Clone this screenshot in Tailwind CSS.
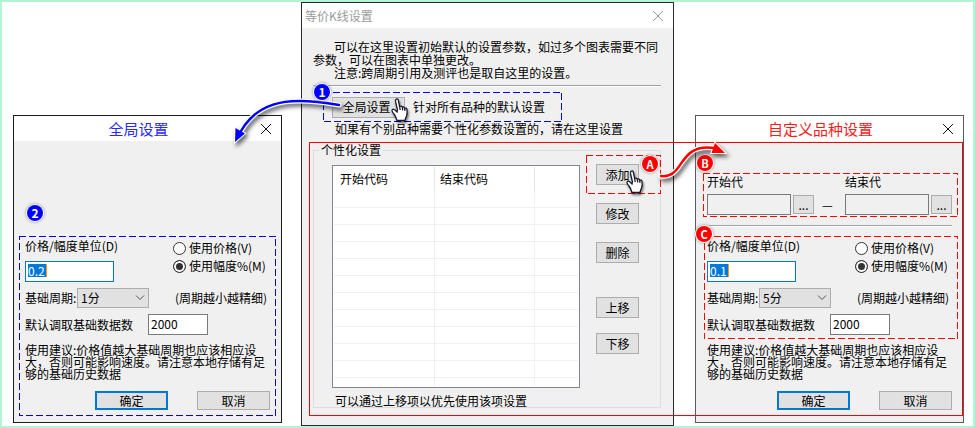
<!DOCTYPE html>
<html lang="zh-CN">
  <head>
    <meta charset="utf-8" />
    <meta name="viewport" content="width=device-width, initial-scale=1" />
    <title>等价K线设置</title>
    <script src="https://cdn.jsdelivr.net/npm/@tailwindcss/browser@4"></script>
  </head>

  <body class="bg-white">
    <main
      class="relative grid min-h-screen grid-cols-[269fr_373fr_269fr] items-end gap-5 border-2 border-[#b0f5d4] pl-[11px] pr-[9px] text-[12px] leading-[12px] text-black"
      style='font-family: "Noto Sans CJK SC", sans-serif;'
    >
      <!-- Global settings dialog -->
      <section class="mb-[3px] border border-[#1c1c1c] bg-[#f0f0f0]">
        <header class="flex h-[25px] items-center bg-white pr-[10px]">
          <h2 class="flex-1 pl-[2px] text-center text-[15px] text-[#2a2aff]">全局设置</h2>
          <button type="button" aria-label="关闭">
            <svg class="size-[10px]" viewBox="0 0 10 10" fill="none" stroke="#111"><path d="M0 0L10 10M10 0L0 10" /></svg>
          </button>
        </header>

        <form class="relative mx-[5px] mb-[6px] mt-[95px] px-[6px] pb-[6px] pt-px">
          <svg class="pointer-events-none absolute inset-0 h-full w-full" fill="none" stroke="#0000e6" stroke-width="2" stroke-dasharray="7 3">
            <rect width="100%" height="100%" />
          </svg>
          <span class="absolute -top-[31px] left-2 flex size-4 items-center justify-center rounded-full bg-[#0000ff] text-[12px] font-bold text-white shadow-[0_0_0_1px_#fff,0_0_3px_1px_#888]">2</span>

          <div class="flex justify-between">
            <div>
              <label class="block leading-[18px]" for="unit1">价格/幅度单位(D)</label>
              <input type="text" id="unit1" value="0.2" class="mt-[6px] block h-[21px] w-[89px] border border-solid border-[#0078d7] bg-white bg-[linear-gradient(to_right,#0078d7_18px,#ff9900_18px)] bg-[length:19px_13px] bg-[position:2px_2px] bg-no-repeat pb-[3px] pl-[2px] text-white outline-none" />
            </div>
            <div class="w-[97px] pt-[2px]">
              <label class="flex h-[18px] items-center gap-[3px] whitespace-nowrap">
                <input type="radio" name="mode1" class="size-[13px] appearance-none rounded-full border border-[#333] bg-white" />使用价格(V)
              </label>
              <label class="flex h-[18px] items-center gap-[3px] whitespace-nowrap">
                <input type="radio" name="mode1" checked class="size-[13px] appearance-none rounded-full border border-[#333] bg-[#333] shadow-[inset_0_0_0_2px_#fff]" />使用幅度%(M)
              </label>
            </div>
          </div>

          <div class="mt-[6px] flex items-center">
            <label class="w-[52px]" for="period1">基础周期:</label>
            <div class="relative">
              <select id="period1" class="block h-5 w-[72px] appearance-none border border-solid border-[#adadad] bg-[#e1e1e1] pl-[3px]">
                <option>1分</option>
              </select>
              <svg class="pointer-events-none absolute right-1 top-[7px] h-[6px] w-[10px]" viewBox="0 0 10 6" fill="none" stroke="#555"><path d="M1 0.5L5 4.5L9 0.5" /></svg>
            </div>
            <span class="ml-auto mr-[3px] whitespace-nowrap">(周期越小越精细)</span>
          </div>

          <div class="mt-[6px] flex items-center">
            <label class="w-[123px]" for="count1">默认调取基础数据数</label>
            <input type="text" id="count1" value="2000" class="h-[21px] w-[60px] border border-solid border-[#7a7a7a] bg-white pb-[3px] pl-[2px] outline-none" />
          </div>

          <p class="mt-[9px] whitespace-nowrap">
            使用建议:价格值越大基础周期也应该相应设<br />大，否则可能影响速度。请注意本地存储有足<br />够的基础历史数据
          </p>
          <div class="mt-[11px] flex justify-end gap-[29px]">
            <button type="button" class="h-[19px] w-[73px] border-2 border-[#0078d7] bg-[#e1e1e1]">确定</button>
            <button type="button" class="h-[19px] w-[73px] border border-[#adadad] bg-[#e1e1e1]">取消</button>
          </div>
        </form>
      </section>

      <!-- Main settings dialog -->
      <section class="-ml-px mr-px self-stretch border border-[#2a2a30] bg-[#f0f0f0]">
        <header class="flex h-[25px] items-center justify-between bg-white pl-[3px] pr-[10px] text-[#999]">
          <h1>等价K线设置</h1>
          <button type="button" aria-label="关闭">
            <svg class="size-[10px]" viewBox="0 0 10 10" fill="none" stroke="#999"><path d="M0 0L10 10M10 0L0 10" /></svg>
          </button>
        </header>

        <div class="pl-[11px] pr-3 pt-3">
          <div class="whitespace-nowrap leading-[13px]">
            <p class="indent-[21px]">可以在这里设置初始默认的设置参数，如过多个图表需要不同<br />参数，可以在图表中单独更改。</p>
            <p class="indent-[21px]">注意:跨周期引用及测评也是取自这里的设置。</p>
          </div>
          <hr class="mt-[6px] h-[2px] border-b border-t border-b-white border-t-[#a0a0a0]" />

          <div class="relative ml-[10px] mt-[5px] flex h-[30px] w-[239px] items-center gap-2 pl-[9px]">
            <svg class="pointer-events-none absolute inset-0 h-full w-full" fill="none" stroke="#0000e6" stroke-width="2" stroke-dasharray="7 3">
              <rect width="100%" height="100%" />
            </svg>
            <span class="absolute -left-[9px] -top-2 z-20 flex size-4 items-center justify-center rounded-full bg-[#0000ff] text-[12px] font-bold text-white shadow-[0_0_0_1px_#fff,0_0_3px_1px_#888]">1</span>
            <button type="button" class="h-[21px] w-[73px] border border-[#adadad] bg-[#e1e1e1] pr-1">全局设置</button>
            <span class="whitespace-nowrap">针对所有品种的默认设置</span>
            <svg class="absolute left-[68px] top-[6px] h-6 w-[18px] drop-shadow-[1px_2px_1px_rgba(0,0,0,0.5)]" viewBox="0 0 18 24" fill="#fff" stroke="#1a1a2a" stroke-width="1.3">
              <path d="M6 14L3.5 11.5Q1.5 10.5 1 12.5Q1 14 3 16Q5 18.5 6 22.5H14Q14.5 20 15.5 18Q16.5 16 16 11.5Q15.5 9.5 13.7 10.3Q13 8.3 11.3 9.3Q10.5 7.3 8.6 8.5L7.3 2Q6.5 0.3 5 1.3Q4.2 2 4.6 4L6.5 12Z" />
              <path d="M8.6 8.5L9.2 12M11.3 9.3L11.8 12.3M13.7 10.3L14 12.8" />
            </svg>
          </div>
          <p class="ml-[22px] mt-px">如果有个别品种需要个性化参数设置的，请在这里设置</p>

          <fieldset class="mt-[9px] border border-[#dcdcdc]">
            <legend class="ml-[5px] px-[2px]">个性化设置</legend>
            <div class="flex">
              <div class="ml-[18px] mt-[9px] h-[223px] flex-1 border border-[#828790] bg-white p-px">
                <table class="w-full table-fixed border-separate border-spacing-0 text-left">
                  <thead>
                    <tr class="h-6">
                      <th class="w-[101px] border-r border-[#e5e5e5] pl-[6px] font-normal">开始代码</th>
                      <th class="w-[100px] border-r border-[#e5e5e5] pl-[5px] font-normal">结束代码</th>
                      <th></th>
                    </tr>
                  </thead>
                  <tbody id="rows"></tbody>
                </table>
              </div>
              <div class="-mr-px -mt-px ml-[6px] flex w-[75px] flex-col">
                <div class="relative h-[39px] pl-[10px] pt-[9px]">
                  <svg class="pointer-events-none absolute inset-0 h-full w-full" fill="none" stroke="#ff0000" stroke-width="2" stroke-dasharray="7 3">
                    <rect width="100%" height="100%" />
                  </svg>
                  <button type="button" class="block h-[21px] w-[43px] border border-[#adadad] bg-[#e1e1e1]">添加</button>
                  <span class="absolute left-14 top-px z-20 flex size-4 items-center justify-center rounded-full bg-[#ff0000] text-[11px] font-bold text-white shadow-[0_0_0_1px_#fff,0_0_3px_1px_#888]">A</span>
                  <svg class="absolute left-10 top-[15px] h-6 w-[18px] drop-shadow-[1px_2px_1px_rgba(0,0,0,0.5)]" viewBox="0 0 18 24" fill="#fff" stroke="#1a1a2a" stroke-width="1.3">
                    <path d="M6 14L3.5 11.5Q1.5 10.5 1 12.5Q1 14 3 16Q5 18.5 6 22.5H14Q14.5 20 15.5 18Q16.5 16 16 11.5Q15.5 9.5 13.7 10.3Q13 8.3 11.3 9.3Q10.5 7.3 8.6 8.5L7.3 2Q6.5 0.3 5 1.3Q4.2 2 4.6 4L6.5 12Z" />
                    <path d="M8.6 8.5L9.2 12M11.3 9.3L11.8 12.3M13.7 10.3L14 12.8" />
                  </svg>
                </div>
                <button type="button" class="ml-[10px] mt-[9px] h-[21px] w-[43px] border border-[#adadad] bg-[#e1e1e1]">修改</button>
                <button type="button" class="ml-[10px] mt-[18px] h-[21px] w-[43px] border border-[#adadad] bg-[#e1e1e1]">删除</button>
                <button type="button" class="ml-[10px] mt-[34px] h-[21px] w-[43px] border border-[#adadad] bg-[#e1e1e1]">上移</button>
                <button type="button" class="ml-[10px] mt-[15px] h-[21px] w-[43px] border border-[#adadad] bg-[#e1e1e1]">下移</button>
              </div>
            </div>
            <p class="ml-[21px] mt-[7px]">可以通过上移项以优先使用该项设置</p>
          </fieldset>
        </div>
      </section>

      <!-- Custom symbol dialog -->
      <section class="mb-[3px] border border-[#5a5a5a] bg-[#f0f0f0]">
        <header class="flex h-[25px] items-center bg-white pr-[10px]">
          <h2 class="flex-1 pl-[2px] text-center text-[15px] text-[#ff1a1a]">自定义品种设置</h2>
          <button type="button" aria-label="关闭">
            <svg class="size-[10px]" viewBox="0 0 10 10" fill="none" stroke="#111"><path d="M0 0L10 10M10 0L0 10" /></svg>
          </button>
        </header>

        <form>
          <div class="relative ml-[7px] mr-[5px] mt-8 flex items-end pb-[2px] pl-1 pt-px">
            <svg class="pointer-events-none absolute inset-0 h-full w-full" fill="none" stroke="#ff0000" stroke-width="2" stroke-dasharray="7 3">
              <rect width="100%" height="100%" />
            </svg>
            <span class="absolute -left-[6px] -top-[18px] flex size-4 items-center justify-center rounded-full bg-[#ff0000] text-[11px] font-bold text-white shadow-[0_0_0_1px_#fff,0_0_3px_1px_#888]">B</span>
            <div>
              <label class="block leading-4" for="from">开始代</label>
              <div class="mt-1 flex items-center gap-[2px]">
                <input type="text" id="from" class="h-[21px] w-[84px] border border-solid border-[#7a7a7a]" />
                <button type="button" class="h-[19px] w-[21px] border border-[#adadad] bg-[#e1e1e1]">...</button>
              </div>
            </div>
            <span class="ml-2 mr-[11px] w-3 leading-[21px]">—</span>
            <div>
              <label class="block leading-4" for="to">结束代</label>
              <div class="mt-1 flex items-center gap-[2px]">
                <input type="text" id="to" class="h-[21px] w-[84px] border border-solid border-[#7a7a7a]" />
                <button type="button" class="h-[19px] w-[21px] border border-[#adadad] bg-[#e1e1e1]">...</button>
              </div>
            </div>
          </div>
          <hr class="ml-[13px] mr-[11px] mt-2 h-[2px] border-b border-t border-b-white border-t-[#a0a0a0]" />

          <div class="relative ml-2 mr-[5px] mt-[9px] pb-1 pl-[3px] pr-[6px] pt-px">
            <svg class="pointer-events-none absolute inset-0 h-full w-full" fill="none" stroke="#ff0000" stroke-width="2" stroke-dasharray="7 3">
              <rect width="100%" height="100%" />
            </svg>
            <span class="absolute -left-2 -top-[10px] flex size-4 items-center justify-center rounded-full bg-[#ff0000] text-[11px] font-bold text-white shadow-[0_0_0_1px_#fff,0_0_3px_1px_#888]">C</span>

            <div class="flex justify-between">
              <div>
                <label class="block leading-[18px]" for="unit2">价格/幅度单位(D)</label>
                <input type="text" id="unit2" value="0.1" class="mt-[6px] block h-[21px] w-[89px] border border-solid border-[#0078d7] bg-white bg-[linear-gradient(to_right,#0078d7_18px,#ff9900_18px)] bg-[length:19px_13px] bg-[position:2px_2px] bg-no-repeat pb-[3px] pl-[2px] text-white outline-none" />
              </div>
              <div class="w-[97px] pt-[2px]">
                <label class="flex h-[18px] items-center gap-[3px] whitespace-nowrap">
                  <input type="radio" name="mode2" class="size-[13px] appearance-none rounded-full border border-[#333] bg-white" />使用价格(V)
                </label>
                <label class="flex h-[18px] items-center gap-[3px] whitespace-nowrap">
                  <input type="radio" name="mode2" checked class="size-[13px] appearance-none rounded-full border border-[#333] bg-[#333] shadow-[inset_0_0_0_2px_#fff]" />使用幅度%(M)
                </label>
              </div>
            </div>

            <div class="mt-[6px] flex items-center">
              <label class="w-[52px]" for="period2">基础周期:</label>
              <div class="relative">
                <select id="period2" class="block h-5 w-[72px] appearance-none border border-solid border-[#adadad] bg-[#e1e1e1] pl-[3px]">
                  <option>5分</option>
                </select>
                <svg class="pointer-events-none absolute right-1 top-[7px] h-[6px] w-[10px]" viewBox="0 0 10 6" fill="none" stroke="#555"><path d="M1 0.5L5 4.5L9 0.5" /></svg>
              </div>
              <span class="ml-auto mr-[3px] whitespace-nowrap">(周期越小越精细)</span>
            </div>

            <div class="mt-[6px] flex items-center">
              <label class="w-[123px]" for="count2">默认调取基础数据数</label>
              <input type="text" id="count2" value="2000" class="h-[21px] w-[60px] border border-solid border-[#7a7a7a] bg-white pb-[3px] pl-[2px] outline-none" />
            </div>
          </div>

          <p class="ml-[11px] mt-[5px] whitespace-nowrap">
            使用建议:价格值越大基础周期也应该相应设<br />大，否则可能影响速度。请注意本地存储有足<br />够的基础历史数据
          </p>
          <div class="mb-3 mr-[11px] mt-[11px] flex justify-end gap-[29px]">
            <button type="button" class="h-[19px] w-[73px] border-2 border-[#0078d7] bg-[#e1e1e1]">确定</button>
            <button type="button" class="h-[19px] w-[73px] border border-[#adadad] bg-[#e1e1e1]">取消</button>
          </div>
        </form>
      </section>

      <!-- Annotations: outline and arrows over the dialogs -->
      <div class="pointer-events-none absolute bottom-[10px] left-[307px] right-[10px] top-[140px] border border-[#ff0000]"></div>
      <svg class="pointer-events-none absolute left-[218px] top-[78px] z-10 h-[80px] w-[130px] drop-shadow-[2px_3px_2px_rgba(0,0,0,0.6)]" viewBox="220 80 130 80" fill="none" stroke-linecap="round">
        <path d="M339 105C305 99 262 94 241 131" stroke="#fff" stroke-width="5" />
        <path d="M235 142L235.5 128L245 133.5Z" fill="#00f" stroke="#fff" stroke-width="2" />
        <path d="M339 105C305 99 262 94 241 131" stroke="#00f" stroke-width="2.5" />
        <path d="M235 142L235.5 128L245 133.5Z" fill="#00f" />
      </svg>
      <svg class="pointer-events-none absolute left-[648px] top-[128px] z-10 h-[60px] w-[90px] drop-shadow-[2px_3px_2px_rgba(0,0,0,0.6)]" viewBox="650 130 90 60" fill="none" stroke-linecap="round">
        <path d="M661 176C685 179 677 143 714 148" stroke="#fff" stroke-width="5" />
        <path d="M725 153L715 143L711.5 153Z" fill="#f00" stroke="#fff" stroke-width="2" />
        <path d="M661 176C685 179 677 143 714 148" stroke="#f00" stroke-width="2.5" />
        <path d="M725 153L715 143L711.5 153Z" fill="#f00" />
      </svg>
    </main>

    <script>
      // Empty list rows, the last one is cut off by the frame
      const rows = document.getElementById("rows");
      for (let i = 0; i < 12; i++) {
        const tr = document.createElement("tr");
        tr.className = i < 11 ? "h-[17px]" : "h-2";
        const line = i < 11 ? "border-b border-[#f0f0f0]" : "border-[#f0f0f0]";
        tr.innerHTML = `<td class="border-r ${line}"></td><td class="border-r ${line}"></td><td class="${line}"></td>`;
        rows.appendChild(tr);
      }
    </script>
  </body>
</html>
